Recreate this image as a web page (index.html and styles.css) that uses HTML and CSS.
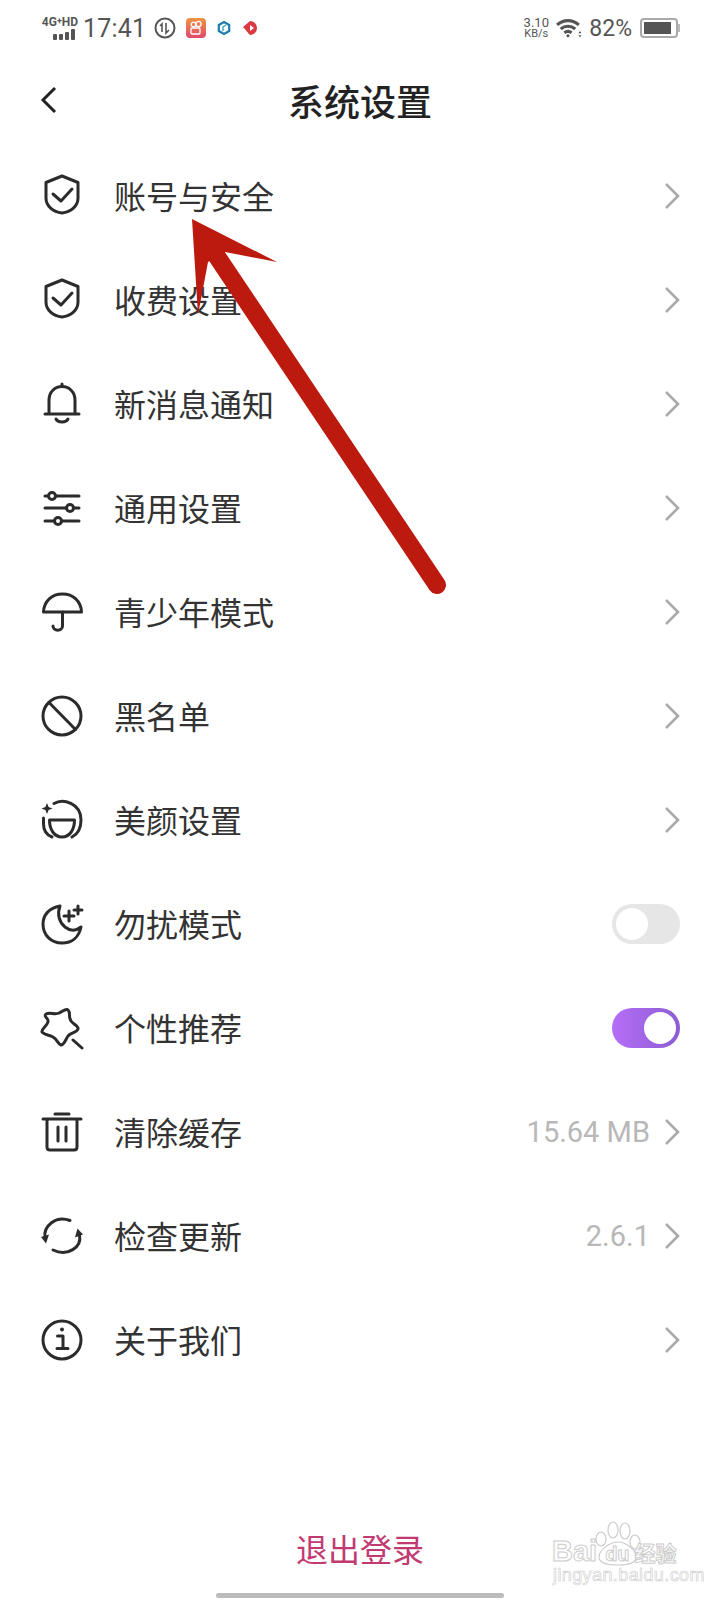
FILE: index.html
```html
<!DOCTYPE html>
<html lang="zh-CN">

<head>
    <meta charset="UTF-8">
    <meta name="viewport" content="width=device-width, initial-scale=1.0">
    <title>系统设置</title>
    <link rel="stylesheet" href="styles.css">
</head>

<body>
    <div class="page">
        <div class="status-bar">
            <div class="network">
                <span class="network-text">4G<sup>+</sup>HD</span>
                <span class="signal"><i></i><i></i><i></i><i></i></span>
            </div>
            <span class="time">17:41</span>
            <svg class="app-icon" width="22" height="22" viewBox="0 0 22 22" fill="none" stroke="#555" stroke-width="2">
                <circle cx="11" cy="11" r="9.5" />
                <path d="M8 15V7L6 9M12 6v10l3-3" stroke-width="1.6" />
            </svg>
            <svg class="app-icon" width="20" height="20" viewBox="0 0 20 20">
                <defs>
                    <linearGradient id="ks" x1="0" y1="0" x2="0" y2="1">
                        <stop offset="0" stop-color="#ee9540" />
                        <stop offset="1" stop-color="#e2486c" />
                    </linearGradient>
                </defs>
                <rect width="20" height="20" rx="4" fill="url(#ks)" />
                <g fill="none" stroke="#fff" stroke-width="1.3">
                    <circle cx="7.5" cy="6.5" r="2.3" />
                    <circle cx="12.5" cy="6" r="2.6" />
                    <rect x="5" y="10" width="9" height="6" rx="1" />
                </g>
            </svg>
            <svg class="app-icon" width="16" height="16" viewBox="0 0 16 16" fill="none">
                <path d="M8 2l5.2 3v6L8 14l-5.2-3V5z" stroke="#1f7fa8" stroke-width="2.2" />
                <path d="M7 11V7l3-2" stroke="#35a3c4" stroke-width="1.4" />
            </svg>
            <svg class="app-icon" width="18" height="18" viewBox="0 0 18 18">
                <path d="M1 8l7-6a7 7 0 1 1 0 14C6 14 3 10 1 8z" fill="#d93a43" />
                <path d="M8 6l4 3-4 3z" fill="#fff" />
            </svg>
            <div class="status-right">
                <div class="speed"><span>3.10</span><span class="speed-unit">KB/s</span></div>
                <svg class="wifi" width="26" height="20" viewBox="0 0 25 19" fill="none" stroke="#555" stroke-width="3">
                    <path d="M1 6.500c6-5.500 15-5.500 21 0M4.500 10.500c4-3.500 10-3.500 14 0M8 14c2-1.500 5-1.500 7 0" />
                    <circle cx="11.500" cy="17" r="1.500" fill="#555" stroke="none" />
                    <path d="M23 12.500l-1.500 2h3zM23 18.500l-1.500-2h3z" fill="#555" stroke="none" />
                </svg>
                <span class="battery-text">82%</span>
                <div class="battery">
                    <div class="battery-body"><div class="battery-fill"></div></div>
                    <div class="battery-cap"></div>
                </div>
            </div>
        </div>

        <header class="header">
            <svg class="back" width="24" height="32" viewBox="0 0 24 32" fill="none" stroke="#222" stroke-width="3">
                <path d="M15 4L3 16l12 12" />
            </svg>
            <h1>系统设置</h1>
            <span></span>
        </header>

        <ul class="list">
            <li class="row">
                <svg class="icon" viewBox="0 0 44 44">
                    <path d="M22 2l16 6.500V24c0 8-7 14-16 15C13 38 6 32 6 24V8.500z" />
                    <path d="M13 20l8 7 11-12" />
                </svg>
                <span class="label">账号与安全</span>
                <svg class="chevron" viewBox="0 0 16 28"><path d="M2 2l12 12L2 26" /></svg>
            </li>
            <li class="row">
                <svg class="icon" viewBox="0 0 44 44">
                    <path d="M22 2l16 6.500V24c0 8-7 14-16 15C13 38 6 32 6 24V8.500z" />
                    <path d="M13 20l8 7 11-12" />
                </svg>
                <span class="label">收费设置</span>
                <svg class="chevron" viewBox="0 0 16 28"><path d="M2 2l12 12L2 26" /></svg>
            </li>
            <li class="row">
                <svg class="icon" viewBox="0 0 44 44">
                    <path d="M5 32h34M9 32V18C9 10 15 4.500 22 4.500S35 10 35 18v14" />
                    <path d="M16 37c2 4 10 4 12 0" />
                    <path d="M22 2v2" />
                </svg>
                <span class="label">新消息通知</span>
                <svg class="chevron" viewBox="0 0 16 28"><path d="M2 2l12 12L2 26" /></svg>
            </li>
            <li class="row">
                <svg class="icon" viewBox="0 0 44 44">
                    <path d="M5 10h3.500M16 10h23M5 22h21M34 22h5M5 35h9M22 35h17" />
                    <circle cx="12" cy="10" r="3.500" />
                    <circle cx="30" cy="22" r="3.500" />
                    <circle cx="18" cy="35" r="3.500" />
                </svg>
                <span class="label">通用设置</span>
                <svg class="chevron" viewBox="0 0 16 28"><path d="M2 2l12 12L2 26" /></svg>
            </li>
            <li class="row">
                <svg class="icon" viewBox="0 0 44 44">
                    <path d="M3.500 22C4 11 12 4 22.500 4S41 11 41.500 22z" />
                    <path d="M22.500 22v14c0 5.500-9.500 5.500-9.500 0" />
                </svg>
                <span class="label">青少年模式</span>
                <svg class="chevron" viewBox="0 0 16 28"><path d="M2 2l12 12L2 26" /></svg>
            </li>
            <li class="row">
                <svg class="icon" viewBox="0 0 44 44">
                    <circle cx="22" cy="22" r="19" />
                    <path d="M9 8.500L35.500 35.500" />
                </svg>
                <span class="label">黑名单</span>
                <svg class="chevron" viewBox="0 0 16 28"><path d="M2 2l12 12L2 26" /></svg>
            </li>
            <li class="row">
                <svg class="icon" viewBox="0 0 44 44">
                    <path d="M12 39C7 37 3.500 33 3.500 26V20M14 5.500C23 0 41 5 41 22c0 8-3 14-9 17" />
                    <path d="M9.500 22h25c0 10-5 17-12.500 17S9.500 32 9.500 22z" />
                    <path class="solid" d="M7 5l1.600 4L12.500 10.500 8.600 12 7 16 5.400 12 1.500 10.500 5.400 9z" />
                </svg>
                <span class="label">美颜设置</span>
                <svg class="chevron" viewBox="0 0 16 28"><path d="M2 2l12 12L2 26" /></svg>
            </li>
            <li class="row">
                <svg class="icon" viewBox="0 0 44 44">
                    <path d="M20 4C9 6 3 13 3 22c0 11 8 19 19 19 10 0 17-6 19-16-5 4-11 4-16 0-6-5-8-13-5-21z" />
                    <path d="M29 9v10M24 14h10M38 4v8M34 8h8" />
                </svg>
                <span class="label">勿扰模式</span>
                <div class="switch"><div class="knob"></div></div>
            </li>
            <li class="row">
                <svg class="icon" viewBox="0 0 44 44">
                    <path d="M6 8c4-2 9 1 13-1 3-1 7-5 9-3 3 3 0 7 3 11 2 3 8 5 7 8-1 4-7 3-10 7-2 3-4 9-7 9-3-1-4-6-8-8-3-2-9-2-11-5-1-3 5-6 6-10S3 11 6 8z" />
                    <path d="M33 34l9 8" />
                </svg>
                <span class="label">个性推荐</span>
                <div class="switch switch-on"><div class="knob"></div></div>
            </li>
            <li class="row">
                <svg class="icon" viewBox="0 0 44 44">
                    <path d="M15 4h14M3 9h38M7 9v28c0 2 1 3 3 3h24c2 0 3-1 3-3V9M18 17v14M26 17v14" />
                </svg>
                <span class="label">清除缓存</span>
                <span class="value">15.64 MB</span>
                <svg class="chevron" viewBox="0 0 16 28"><path d="M2 2l12 12L2 26" /></svg>
            </li>
            <li class="row">
                <svg class="icon" viewBox="0 0 44 44">
                    <path d="M5 24C3 12 16 1 30 6.500M39.500 21C42 33 28 43 13 36" />
                    <path class="solid" d="M1 23l8-2.500-3 9zM43 20.500l-8 3 2.500-9z" />
                </svg>
                <span class="label">检查更新</span>
                <span class="value">2.6.1</span>
                <svg class="chevron" viewBox="0 0 16 28"><path d="M2 2l12 12L2 26" /></svg>
            </li>
            <li class="row">
                <svg class="icon" viewBox="0 0 44 44">
                    <circle cx="22" cy="22" r="19" />
                    <path d="M17.500 18H23v12.500M17 30.500h11" />
                    <circle class="solid" cx="22" cy="11.500" r="2" />
                </svg>
                <span class="label">关于我们</span>
                <svg class="chevron" viewBox="0 0 16 28"><path d="M2 2l12 12L2 26" /></svg>
            </li>
        </ul>

        <div class="logout">退出登录</div>
        <div class="home-bar"></div>

        <!-- red arrow drawn on top of the screenshot -->
        <svg class="arrow" width="720" height="1600" viewBox="0 0 720 1600">
            <path d="M192 219L277 262 225 252 208 262 198 315z" fill="#bd1a0f" />
            <path d="M216 255L437 585" stroke="#bd1a0f" stroke-width="18" stroke-linecap="round" />
        </svg>

        <div class="watermark">
            <svg class="paw" width="60" height="46" viewBox="0 0 60 46" fill="#fff" stroke="#ccc" stroke-width="1.2">
                <ellipse cx="9" cy="19" rx="5" ry="7" />
                <ellipse cx="21" cy="10" rx="5" ry="8" />
                <ellipse cx="33" cy="11" rx="5" ry="8" />
                <ellipse cx="43" cy="22" rx="5" ry="7" />
                <path d="M26 22c8 0 18 8 18 15 0 7-9 8-18 8S7 44 7 37c0-7 11-15 19-15z" />
            </svg>
            <div class="mark-top"><span>Bai</span><span class="mark-du">du</span><span class="mark-cn">经验</span></div>
            <div class="mark-url">jingyan.baidu.com</div>
        </div>
    </div>
</body>

</html>
```

FILE: styles.css
```css
* { box-sizing: border-box; }
body {
    margin: 0;
    background: #fff;
    font-family: "Noto Sans CJK SC", Roboto, sans-serif;
    color: #333;
}
.page {
    position: relative;
    width: 720px;
    height: 1600px;
    display: flex;
    flex-direction: column;
    overflow: hidden;
}

/* status bar */
.status-bar {
    height: 56px;
    display: flex;
    align-items: center;
    padding: 0 40px 0 41px;
    color: #555;
    font-family: Roboto, sans-serif;
}
.network {
    width: 38px;
    display: flex;
    flex-direction: column;
    align-items: center;
    gap: 1px;
}
.network-text { font-size: 12px; font-weight: 700; line-height: 11px; white-space: nowrap; }
.network-text sup { font-size: 9px; line-height: 0; vertical-align: 2px; }
.signal { display: flex; align-items: flex-end; gap: 2px; margin-left: 8px; }
.signal i { display: block; width: 4px; height: 6px; background: #555; border-radius: 1px; }
.signal i:nth-child(3) { height: 8px; }
.signal i:nth-child(4) { height: 11px; }
.time { font-size: 25px; margin-left: 4px; margin-right: 8px; letter-spacing: 0.2px; }
.app-icon { margin-right: 10px; flex: none; }
.status-right { margin-left: auto; display: flex; align-items: center; }
.speed { display: flex; flex-direction: column; align-items: center; font-size: 13px; line-height: 12px; width: 28px; }
.speed-unit { font-size: 11px; line-height: 10px; }
.wifi { margin-left: 6px; }
.battery-text { font-size: 23px; margin-left: 7px; margin-right: 8px; }
.battery { display: flex; align-items: center; }
.battery-body { width: 38px; height: 20px; border: 2px solid #aaa; border-radius: 4px; padding: 2px; }
.battery-fill { width: 27px; height: 100%; background: #555; }
.battery-cap { width: 2px; height: 8px; background: #bbb; }

/* header */
.header {
    height: 88px;
    padding: 20px 0 0 40px;
    display: grid;
    grid-template-columns: 1fr auto 1fr;
    align-items: center;
    align-self: stretch;
    align-content: start;
}
.header h1 { margin: 0; font-size: 36px; font-weight: 500; line-height: 48px; color: #222; transform: translateX(-20px); }

/* rows */
.list { list-style: none; margin: 0; padding: 0; }
.row {
    height: 104px;
    display: flex;
    align-items: center;
    padding: 0 40px;
}
.icon {
    width: 44px;
    height: 44px;
    flex: none;
    fill: none;
    stroke: #2b2b2b;
    stroke-width: 3;
    stroke-linecap: round;
    stroke-linejoin: round;
}
.icon .solid { fill: #2b2b2b; stroke: none; }
.label { font-size: 32px; line-height: 44px; padding-bottom: 2px; margin-left: 30px; flex: 1; color: #333; }
.value { font-family: Roboto, sans-serif; font-size: 29px; color: #b8b8b8; margin-right: 14px; }
.chevron {
    width: 16px;
    height: 28px;
    flex: none;
    fill: none;
    stroke: #aaa;
    stroke-width: 2.6;
}

/* switches */
.switch {
    width: 68px;
    height: 40px;
    border-radius: 20px;
    background: #e6e6e6;
    padding: 4px;
    display: flex;
}
.knob { width: 32px; height: 32px; border-radius: 50%; background: #fff; }
.switch-on { background: linear-gradient(90deg, #b56ef7, #8d5cd4); justify-content: flex-end; }

/* bottom */
.logout {
    margin-top: auto;
    text-align: center;
    font-size: 32px;
    line-height: 50px;
    color: #c23a72;
}
.home-bar {
    width: 288px;
    height: 5px;
    margin: 20px auto 2px;
    border-radius: 3px;
    background: #bbb;
}

/* overlays */
.arrow { position: absolute; left: 0; top: 0; pointer-events: none; }
.watermark {
    position: absolute;
    left: 552px;
    top: 1520px;
    width: 130px;
    height: 64px;
    font-family: "Liberation Sans", sans-serif;
    color: #fff;
    -webkit-text-stroke: 1px #ccc;
}
.paw { position: absolute; left: 40px; top: 0; }
.mark-top {
    position: absolute;
    left: 0;
    top: 15px;
    display: flex;
    align-items: baseline;
    font-size: 29px;
    font-weight: 700;
    line-height: 32px;
}
.mark-du { font-size: 20px; margin-left: 8px; }
.mark-cn { font-family: "Noto Sans CJK SC", sans-serif; font-size: 21px; margin-left: 5px; }
.mark-url {
    position: absolute;
    left: 1px;
    top: 46px;
    font-size: 18px;
    line-height: 18px;
    letter-spacing: 0.4px;
    white-space: nowrap;
    -webkit-text-stroke: 0.6px #ccc;
}
```
